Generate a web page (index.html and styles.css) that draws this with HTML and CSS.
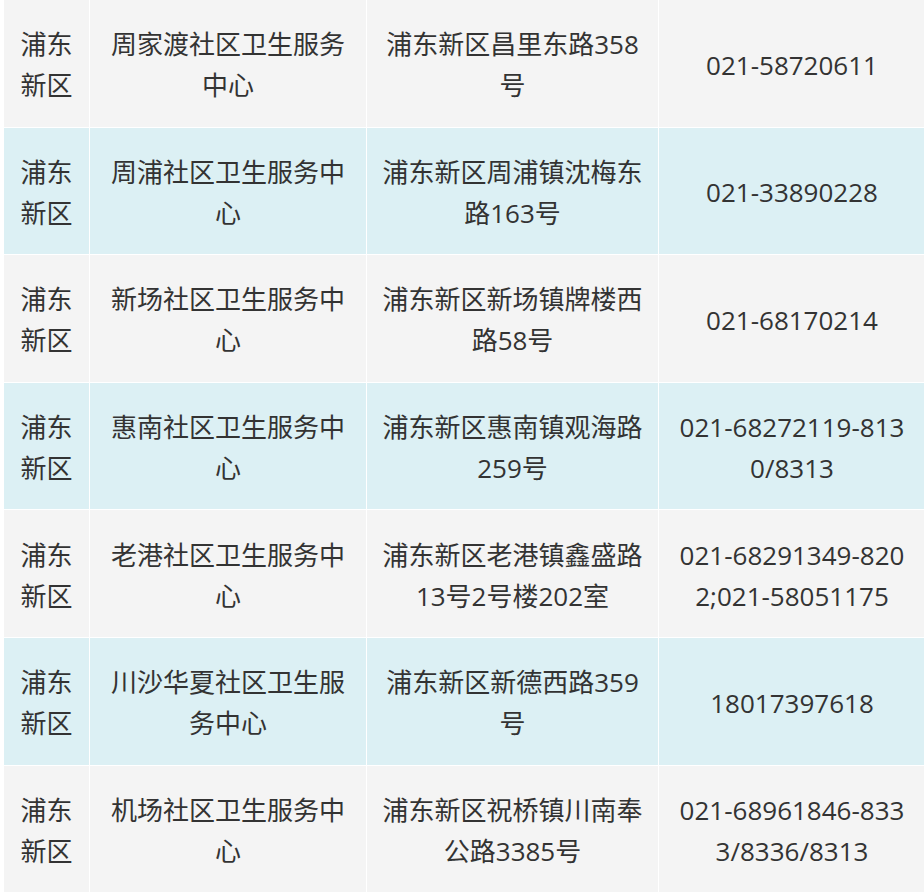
FILE: index.html
```html
<!DOCTYPE html>
<html lang="zh-CN">
<head>
    <meta charset="UTF-8">
    <meta name="viewport" content="width=device-width, initial-scale=1.0">
    <title>社区卫生服务中心</title>
    <link rel="stylesheet" href="styles.css">
</head>
<body>

    <!-- 社区卫生服务中心列表 -->
    <table class="clinic-table">
        <colgroup>
            <col class="col-area">
            <col class="col-name">
            <col class="col-addr">
            <col class="col-phone">
        </colgroup>
        <tbody>
            <tr>
                <td>浦东新区</td>
                <td>周家渡社区卫生服务中心</td>
                <td>浦东新区昌里东路358号</td>
                <td class="phone">021-58720611</td>
            </tr>
            <tr>
                <td>浦东新区</td>
                <td>周浦社区卫生服务中心</td>
                <td>浦东新区周浦镇沈梅东路163号</td>
                <td class="phone">021-33890228</td>
            </tr>
            <tr>
                <td>浦东新区</td>
                <td>新场社区卫生服务中心</td>
                <td>浦东新区新场镇牌楼西路58号</td>
                <td class="phone">021-68170214</td>
            </tr>
            <tr>
                <td>浦东新区</td>
                <td>惠南社区卫生服务中心</td>
                <td>浦东新区惠南镇观海路259号</td>
                <td class="phone">021-68272119-8130/8313</td>
            </tr>
            <tr>
                <td>浦东新区</td>
                <td>老港社区卫生服务中心</td>
                <td>浦东新区老港镇鑫盛路13号2号楼202室</td>
                <td class="phone">021-68291349-8202;021-58051175</td>
            </tr>
            <tr>
                <td>浦东新区</td>
                <td>川沙华夏社区卫生服务中心</td>
                <td>浦东新区新德西路359号</td>
                <td class="phone">18017397618</td>
            </tr>
            <tr>
                <td>浦东新区</td>
                <td>机场社区卫生服务中心</td>
                <td>浦东新区祝桥镇川南奉公路3385号</td>
                <td class="phone">021-68961846-8333/8336/8313</td>
            </tr>
        </tbody>
    </table>

</body>
</html>
```

FILE: styles.css
```css
body {
    margin: 0;
    padding: 0 0 0 3px;
    background-color: #fff;
    font-family: 'Open Sans', 'Noto Sans CJK SC', sans-serif;
    overflow: hidden;
}

/* Tabela */
.clinic-table {
    width: 922px;
    table-layout: fixed;
    border-collapse: collapse;
    font-size: 26px;
    line-height: 41px;
    color: #333;
}
.col-area { width: 86px; }
.col-name { width: 277px; }
.col-addr { width: 292px; }
.col-phone { width: 267px; }

.clinic-table td {
    padding: 24.3px 15px 20.3px;
    text-align: center;
    vertical-align: middle;
    border: 1px solid #fff;
    border-top: 0;
}
.clinic-table tr:nth-child(odd) td {
    background-color: #f4f4f4;
}
.clinic-table tr:nth-child(even) td {
    background-color: #dcf0f4;
}
.clinic-table td.phone {
    word-break: break-all;
}
```
